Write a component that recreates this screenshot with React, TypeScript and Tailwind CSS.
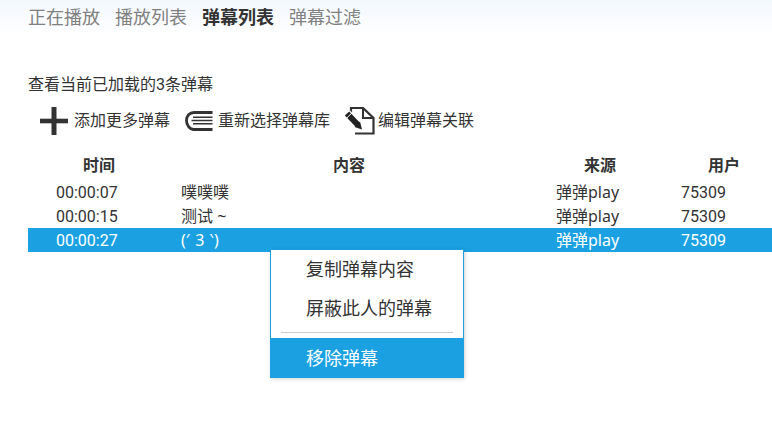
const FONT = "font-['Roboto','Noto_Sans_CJK_SC',sans-serif]";
const COLS = "grid grid-cols-[142px_358px_144px_104px] items-baseline text-[16px] leading-[24px]";

const tabs = [
  { label: "正在播放", active: false },
  { label: "播放列表", active: false },
  { label: "弹幕列表", active: true },
  { label: "弹幕过滤", active: false },
];

const rows = [
  { time: "00:00:07", text: "噗噗噗", source: "弹弹play", user: "75309", selected: false },
  { time: "00:00:15", text: "测试 ~", source: "弹弹play", user: "75309", selected: false },
  { time: "00:00:27", text: "(′ \u200A3\u200A ‵)", source: "弹弹play", user: "75309", selected: true },
];

function PlusIcon() {
  return (
    <svg width="28" height="28" viewBox="0 0 28 28" fill="#333">
      <rect x="0" y="11.700" width="28" height="4.600" />
      <rect x="11.500" y="0" width="5" height="28" />
    </svg>
  );
}

function BookIcon() {
  return (
    <svg width="28" height="20" viewBox="0 0 28 20" fill="none" stroke="#333">
      <path d="M27.500 1.500H9C4.500 1.500 1.500 5 1.500 9.500S4.500 18.500 9 18.500H27.500" strokeWidth="2.800" />
      <path d="M8 6.200H27.500M6.500 9.500H27.500M8 12.800H27.500" strokeWidth="1.500" />
    </svg>
  );
}

function DocEditIcon() {
  return (
    <svg width="32" height="28" viewBox="0 0 32 28" fill="none">
      <path d="M7 7V1H19L29.500 11V26.500H11" stroke="#333" strokeWidth="2.200" />
      <path d="M19 1.500V11H29" stroke="#333" strokeWidth="2" />
      <path d="M3 6.500L14 18" stroke="#fff" strokeWidth="8.500" />
      <path d="M3 6.500L14 18" stroke="#222" strokeWidth="6" />
      <path d="M10.500 20L16 14.500L18 22.500Z" fill="#222" />
      <path d="M2.800 11L8 5.800" stroke="#fff" strokeWidth="1" />
    </svg>
  );
}

export default function App() {
  return (
    <div className={`${FONT} relative w-[772px] h-[426px] overflow-hidden bg-white text-[#333]`}>
      <div className="h-[36px] bg-gradient-to-b from-[#f3f8fd] to-white flex items-center pl-[28px] gap-[15px]">
        {tabs.map((t) => (
          <span
            key={t.label}
            className={t.active ? "text-[18px] leading-[24px] font-bold text-[#333]" : "text-[18px] leading-[24px] text-[#808080]"}
          >
            {t.label}
          </span>
        ))}
      </div>

      <div className="pl-[28px] pt-[37px] text-[16px] leading-[24px]">查看当前已加载的3条弹幕</div>

      <div className="flex items-center h-[28px] mt-[10px] pl-[40px] text-[16px]">
        <PlusIcon />
        <span className="ml-[6px]">添加更多弹幕</span>
        <span className="ml-[15px]"><BookIcon /></span>
        <span className="ml-[5px]">重新选择弹幕库</span>
        <span className="ml-[14px]"><DocEditIcon /></span>
        <span className="ml-[2px]">编辑弹幕关联</span>
      </div>

      <div className="ml-[28px] mt-[16px]">
        <div className={`${COLS} h-[29px] pt-[3px] font-bold text-center`}>
          <span>时间</span>
          <span>内容</span>
          <span>来源</span>
          <span>用户</span>
        </div>
        {rows.map((r) => (
          <div key={r.time} className={r.selected ? `${COLS} h-[24px] bg-[#1ba1e2] text-white` : `${COLS} h-[24px]`}>
            <span className="pl-[28px]">{r.time}</span>
            <span className="pl-[11px] font-['Noto_Sans','Noto_Sans_CJK_SC',sans-serif]">{r.text}</span>
            <span className="pl-[28px] font-['Noto_Sans','Noto_Sans_CJK_SC',sans-serif]">{r.source}</span>
            <span className="pl-[9px]">{r.user}</span>
          </div>
        ))}
      </div>

      <div className="absolute left-[270px] top-[249px] w-[194px] border border-[#1ba1e2] border-b-0 bg-white text-[18px] shadow-[1px_1px_4px_rgba(0,0,0,0.18)]">
        <div className="h-[39px] flex items-center pl-[35px]">复制弹幕内容</div>
        <div className="h-[39px] flex items-center pl-[35px]">屏蔽此人的弹幕</div>
        <div className="h-[10px] mx-[10px] pt-[4px]">
          <div className="h-px bg-[#ccc]" />
        </div>
        <div className="h-[40px] -mx-px flex items-center pl-[36px] bg-[#1ba1e2] text-white">移除弹幕</div>
      </div>
    </div>
  );
}
